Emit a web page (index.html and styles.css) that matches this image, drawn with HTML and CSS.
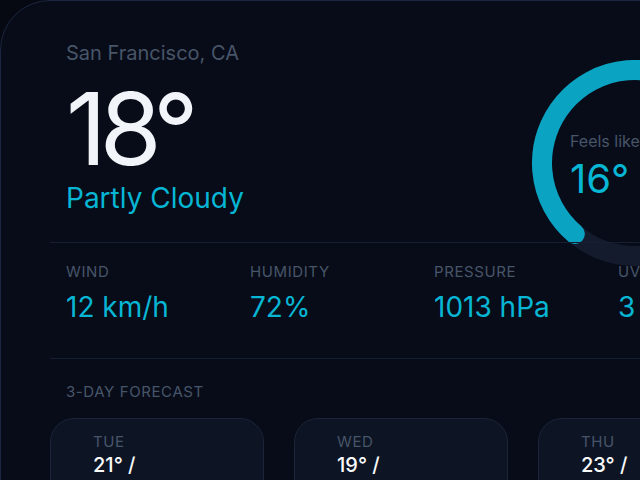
FILE: index.html
```html
<!DOCTYPE html>
<html lang="en">
<head>
<meta charset="utf-8">
<title>Weather</title>
<link rel="stylesheet" href="styles.css">
</head>
<body>
<main class="card">
  <header class="current">
    <div class="now">
      <div class="location">San Francisco, CA</div>
      <div class="temp">18°</div>
      <div class="condition">Partly Cloudy</div>
    </div>
    <div class="gauge">
      <svg class="ring" width="206" height="206" viewBox="0 0 206 206">
        <circle cx="103" cy="103" r="93" class="track"/>
        <circle cx="103" cy="103" r="93" class="arc" transform="rotate(130.3 103 103)" stroke-dasharray="438 1000"/>
      </svg>
      <div class="feels">
        <div class="feels-label">Feels like</div>
        <div class="feels-value">16°</div>
      </div>
    </div>
  </header>

  <section class="stats">
    <div class="stat"><div class="label">Wind</div><div class="value">12 km/h</div></div>
    <div class="stat"><div class="label">Humidity</div><div class="value">72%</div></div>
    <div class="stat"><div class="label">Pressure</div><div class="value">1013 hPa</div></div>
    <div class="stat"><div class="label">UV Index</div><div class="value">3</div></div>
  </section>

  <section class="forecast">
    <div class="label title">3-Day Forecast</div>
    <div class="days">
      <div class="day"><div class="label">Tue</div><div class="hilo">21° / <span class="lo">14°</span></div></div>
      <div class="day"><div class="label">Wed</div><div class="hilo">19° / <span class="lo">13°</span></div></div>
      <div class="day"><div class="label">Thu</div><div class="hilo">23° / <span class="lo">15°</span></div></div>
    </div>
  </section>
</main>
</body>
</html>
```

FILE: styles.css
```css
html, body {
  margin: 0;
  padding: 0;
  overflow: hidden;
  background: #060912;
}

body {
  font-family: "Inter", "Noto Sans", sans-serif;
  color: #f1f5f9;
}

.card {
  width: 702px;
  padding: 38px 49px 40px;
  background: #080c18;
  border: 1px solid #1c2640;
  border-radius: 50px;
}

.current {
  height: 203px;
  padding: 0 14px 0 16px;
  display: flex;
  justify-content: space-between;
  align-items: flex-start;
}

.location {
  font-size: 20px;
  line-height: 28px;
  color: #475569;
}

.temp {
  margin-top: 12px;
  font-size: 100px;
  line-height: 100px;
  font-weight: 400;
  letter-spacing: -0.07em;
  color: #f1f5f9;
}

.condition {
  margin-top: 2px;
  font-size: 28px;
  line-height: 34px;
  color: #06b6d4;
}

.gauge {
  position: relative;
  width: 206px;
  height: 206px;
  margin-top: 21px;
  flex: none;
}

.ring {
  display: block;
}

.track {
  fill: none;
  stroke: #141b2d;
  stroke-width: 20;
}

.arc {
  fill: none;
  stroke: #0aa3c2;
  stroke-width: 20;
  stroke-linecap: round;
}

.feels {
  position: absolute;
  left: 38px;
  top: 70px;
}

.feels-label {
  font-size: 16px;
  line-height: 22px;
  color: #475569;
}

.feels-value {
  margin-top: 5px;
  font-size: 40px;
  line-height: 44px;
  color: #06b6d4;
}

.stats {
  position: relative;
  border-top: 1px solid #161e31;
  border-bottom: 1px solid #161e31;
  padding: 18px 0 34px;
  display: grid;
  grid-template-columns: repeat(4, 1fr);
  column-gap: 34px;
}

.stat {
  padding-left: 16px;
}

.label {
  font-size: 15px;
  line-height: 21px;
  letter-spacing: 0.04em;
  text-transform: uppercase;
  color: #475569;
}

.value {
  margin-top: 8px;
  font-size: 28px;
  line-height: 34px;
  color: #06b6d4;
}

.forecast {
  padding-top: 22px;
}

.title {
  padding-left: 16px;
}

.days {
  margin-top: 16px;
  display: grid;
  grid-template-columns: repeat(3, 1fr);
  column-gap: 30px;
}

.day {
  background: #0d1424;
  border: 1px solid #1b2438;
  border-radius: 24px;
  padding: 12px 42px 16px;
}

.hilo {
  font-size: 20px;
  line-height: 26px;
  font-weight: 500;
  color: #f8fafc;
}

.lo {
  display: block;
  color: #64748b;
}
```
